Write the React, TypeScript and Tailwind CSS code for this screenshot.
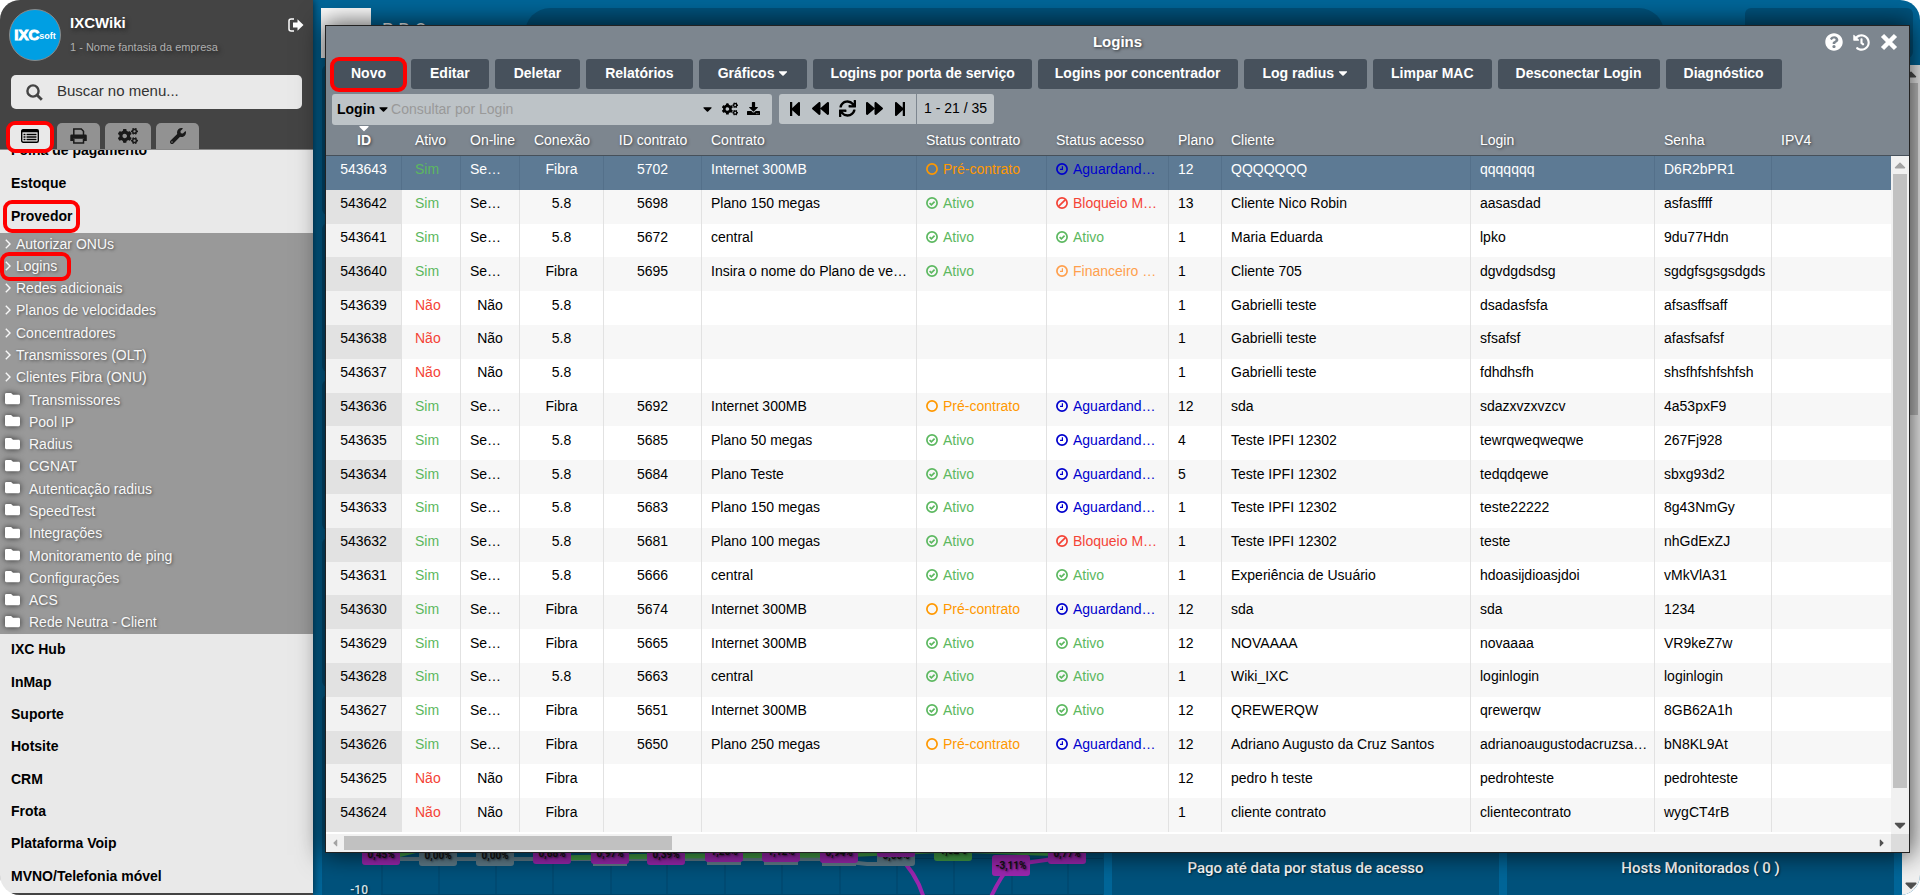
import { ReactNode, useState } from "react";
import {
  FaBackward,
  FaCaretDown,
  FaCaretLeft,
  FaCaretRight,
  FaCaretUp,
  FaCogs,
  FaDownload,
  FaFolder,
  FaForward,
  FaHistory,
  FaQuestionCircle,
  FaStepBackward,
  FaStepForward,
  FaSync,
  FaWrench,
} from "react-icons/fa";

type Row = [string, string, string, string, string, string, string, string, string, string, string, string];

// id, ativo, on-line, conexão, id contrato, contrato, status contrato, status acesso, plano, cliente, login, senha
const rows: Row[] = [
  ["543643", "Sim", "Se…", "Fibra", "5702", "Internet 300MB", "Pré-contrato", "Aguardand…", "12", "QQQQQQQ", "qqqqqqq", "D6R2bPR1"],
  ["543642", "Sim", "Se…", "5.8", "5698", "Plano 150 megas", "Ativo", "Bloqueio M…", "13", "Cliente Nico Robin", "aasasdad", "asfasffff"],
  ["543641", "Sim", "Se…", "5.8", "5672", "central", "Ativo", "Ativo", "1", "Maria Eduarda", "lpko", "9du77Hdn"],
  ["543640", "Sim", "Se…", "Fibra", "5695", "Insira o nome do Plano de ve…", "Ativo", "Financeiro …", "1", "Cliente 705", "dgvdgdsdsg", "sgdgfsgsgsdgds"],
  ["543639", "Não", "Não", "5.8", "", "", "", "", "1", "Gabrielli teste", "dsadasfsfa", "afsasffsaff"],
  ["543638", "Não", "Não", "5.8", "", "", "", "", "1", "Gabrielli teste", "sfsafsf", "afasfsafsf"],
  ["543637", "Não", "Não", "5.8", "", "", "", "", "1", "Gabrielli teste", "fdhdhsfh", "shsfhfshfshfsh"],
  ["543636", "Sim", "Se…", "Fibra", "5692", "Internet 300MB", "Pré-contrato", "Aguardand…", "12", "sda", "sdazxvzxvzcv", "4a53pxF9"],
  ["543635", "Sim", "Se…", "5.8", "5685", "Plano 50 megas", "Ativo", "Aguardand…", "4", "Teste IPFI 12302", "tewrqweqweqwe", "267Fj928"],
  ["543634", "Sim", "Se…", "5.8", "5684", "Plano Teste", "Ativo", "Aguardand…", "5", "Teste IPFI 12302", "tedqdqewe", "sbxg93d2"],
  ["543633", "Sim", "Se…", "5.8", "5683", "Plano 150 megas", "Ativo", "Aguardand…", "1", "Teste IPFI 12302", "teste22222", "8g43NmGy"],
  ["543632", "Sim", "Se…", "5.8", "5681", "Plano 100 megas", "Ativo", "Bloqueio M…", "1", "Teste IPFI 12302", "teste", "nhGdExZJ"],
  ["543631", "Sim", "Se…", "5.8", "5666", "central", "Ativo", "Ativo", "1", "Experiência de Usuário", "hdoasijdioasjdoi", "vMkVlA31"],
  ["543630", "Sim", "Se…", "Fibra", "5674", "Internet 300MB", "Pré-contrato", "Aguardand…", "12", "sda", "sda", "1234"],
  ["543629", "Sim", "Se…", "Fibra", "5665", "Internet 300MB", "Ativo", "Ativo", "12", "NOVAAAA", "novaaaa", "VR9keZ7w"],
  ["543628", "Sim", "Se…", "5.8", "5663", "central", "Ativo", "Ativo", "1", "Wiki_IXC", "loginlogin", "loginlogin"],
  ["543627", "Sim", "Se…", "Fibra", "5651", "Internet 300MB", "Ativo", "Ativo", "12", "QREWERQW", "qrewerqw", "8GB62A1h"],
  ["543626", "Sim", "Se…", "Fibra", "5650", "Plano 250 megas", "Pré-contrato", "Aguardand…", "12", "Adriano Augusto da Cruz Santos", "adrianoaugustodacruzsa…", "bN8KL9At"],
  ["543625", "Não", "Não", "Fibra", "", "", "", "", "12", "pedro h teste", "pedrohteste", "pedrohteste"],
  ["543624", "Não", "Não", "Fibra", "", "", "", "", "1", "cliente contrato", "clientecontrato", "wygCT4rB"],
];

const columns = [
  { label: "ID", col: "w-[76px]", cell: "text-center" },
  { label: "Ativo", col: "w-[59px]", cell: "pl-[13px] text-left" },
  { label: "On-line", col: "w-[59px]", cell: "pl-[9px] text-left" },
  { label: "Conexão", col: "w-[84px]", cell: "text-center" },
  { label: "ID contrato", col: "w-[98px]", cell: "text-center" },
  { label: "Contrato", col: "w-[215px]", cell: "pl-[9px] text-left" },
  { label: "Status contrato", col: "w-[130px]", cell: "pl-[9px] text-left" },
  { label: "Status acesso", col: "w-[122px]", cell: "pl-[9px] text-left" },
  { label: "Plano", col: "w-[53px]", cell: "pl-[9px] text-left" },
  { label: "Cliente", col: "w-[249px]", cell: "pl-[9px] text-left" },
  { label: "Login", col: "w-[184px]", cell: "pl-[9px] text-left" },
  { label: "Senha", col: "w-[117px]", cell: "pl-[9px] text-left" },
  { label: "IPV4", col: "", cell: "pl-[9px] text-left" },
];

const links = [
  "Autorizar ONUs",
  "Logins",
  "Redes adicionais",
  "Planos de velocidades",
  "Concentradores",
  "Transmissores (OLT)",
  "Clientes Fibra (ONU)",
];

const folders = [
  "Transmissores",
  "Pool IP",
  "Radius",
  "CGNAT",
  "Autenticação radius",
  "SpeedTest",
  "Integrações",
  "Monitoramento de ping",
  "Configurações",
  "ACS",
  "Rede Neutra - Client",
];

const modules = ["IXC Hub", "InMap", "Suporte", "Hotsite", "CRM", "Frota", "Plataforma Voip", "MVNO/Telefonia móvel"];

const actions = [
  { label: "Novo", pad: "px-[19px]", marked: true },
  { label: "Editar", pad: "px-[19px]" },
  { label: "Deletar", pad: "px-[19px]" },
  { label: "Relatórios", pad: "px-[19px]" },
  { label: "Gráficos", pad: "px-[19px]", menu: true },
  { label: "Logins por porta de serviço", pad: "px-[17px]" },
  { label: "Logins por concentrador", pad: "px-[17px]" },
  { label: "Log radius", pad: "px-[19px]", menu: true },
  { label: "Limpar MAC", pad: "px-[18px]" },
  { label: "Desconectar Login", pad: "px-[18px]" },
  { label: "Diagnóstico", pad: "px-[18px]" },
];

function Marker({ className }: { className: string }) {
  return <span className={`pointer-events-none absolute z-20 rounded-[9px] border-4 border-[#ff0000] ${className}`} />;
}

function StatusIcon({ status }: { status: string }) {
  let shape: ReactNode = null;
  if (status === "Ativo") shape = <path d="M3.6 6.1l1.8 1.8 3.2-3.2" />;
  if (status.startsWith("Bloqueio")) shape = <path d="M9.2 2.8l-6.4 6.4" />;
  if (status.startsWith("Aguardand") || status.startsWith("Financeiro")) shape = <path d="M6.4 3.2v3.2H4" strokeWidth="1.2" />;
  return (
    <svg viewBox="0 0 12 12" className="h-3 w-3 shrink-0" fill="none" stroke="currentColor" strokeWidth="1.7">
      <circle cx="6" cy="6" r="5.1" />
      {shape}
    </svg>
  );
}

function statusColor(status: string) {
  if (status === "Ativo") return "text-[#5cb860]";
  if (status === "Pré-contrato") return "text-[#ff9800]";
  if (status.startsWith("Aguardand")) return "text-[#0000cd]";
  if (status.startsWith("Bloqueio")) return "text-[#f44336]";
  return "text-[#ffa04d]";
}

function Status({ status }: { status: string }) {
  if (!status) return null;
  return (
    <span className={`flex items-center gap-[5px] ${statusColor(status)}`}>
      <StatusIcon status={status} />
      {status}
    </span>
  );
}

function Sidebar() {
  const [term, setTerm] = useState("");

  return (
    <aside className="relative z-10 flex w-[313px] shrink-0 flex-col bg-[#e9e9e9] shadow-[0_0_8px_rgba(0,0,0,0.7)]">
      <header className="relative z-10 flex h-[150px] shrink-0 flex-col border-b border-[#888] bg-[#444] px-[11px]">
        <div className="flex h-[70px] items-center">
          <div className="-ml-[2px] flex h-[52px] w-[52px] items-center justify-center rounded-full border border-[#8a8a8a] bg-[#009fe3] text-white">
            <span className="text-[15px] font-black [-webkit-text-stroke:1px_white]">IXC</span>
            <span className="pt-1 text-[9px] font-bold">soft</span>
          </div>
          <div className="ml-[9px] flex-1 [text-shadow:2px_2px_4px_rgba(0,0,0,0.5)]">
            <div className="text-[15px] leading-6 font-bold text-white">IXCWiki</div>
            <div className="text-[11px] leading-6 text-[#b0b0b0]">1 - Nome fantasia da empresa</div>
          </div>
          <button aria-label="Sair" className="-mr-[2px] mb-5 text-white">
            <svg viewBox="0 0 16 14" className="h-[14px] w-4">
              <path d="M6 1H3.2C1.8 1 1 1.8 1 3v8c0 1.2.8 2 2.2 2H6" fill="none" stroke="currentColor" strokeWidth="1.5" />
              <path d="M9.5 1.2 15.500 7l-6 5.800V9.500H5V4.500h4.500z" fill="currentColor" />
            </svg>
          </button>
        </div>

        <label className="mt-[5px] flex h-[34px] items-center rounded-[5px] bg-[#e9e9e9] pl-[15px]">
          <svg viewBox="0 0 17 17" className="h-[17px] w-[17px] shrink-0 text-[#444]" fill="none" stroke="currentColor">
            <circle cx="7" cy="7" r="5.6" strokeWidth="2.4" />
            <path d="M11 11l4.800 4.800" strokeWidth="2.8" />
          </svg>
          <input
            type="text"
            value={term}
            onChange={(e) => setTerm(e.target.value)}
            placeholder="Buscar no menu..."
            aria-label="Buscar no menu"
            className="ml-[14px] w-full bg-transparent pb-[2px] text-[15px] text-[#333] outline-none placeholder:text-[#333]"
          />
        </label>

        <div className="mt-auto flex h-[26px] items-stretch gap-[5px] text-[#1a1a1a]">
          <button aria-label="Menu" className="relative -ml-[3px] flex w-[44px] items-center justify-center rounded-t-[5px] bg-[#e9e9e9] text-black">
            <svg viewBox="0 0 18 14" className="h-[14px] w-[18px]">
              <rect x="0.700" y="0.700" width="16.600" height="12.600" rx="1.500" fill="none" stroke="currentColor" strokeWidth="1.400" />
              <rect x="0.700" y="0.700" width="16.600" height="2.600" fill="currentColor" />
              <path d="M2.500 5.500h2M2.500 8h2M2.500 10.500h2M5.500 5.500h10M5.500 8h10M5.500 10.500h10" stroke="currentColor" strokeWidth="1.500" />
            </svg>
            <Marker className="-top-[2px] -bottom-[4px] -left-[2px] -right-[2px]" />
          </button>
          <button aria-label="Imprimir" className="flex w-[43px] items-center justify-center rounded-t-[5px] bg-[#929292]">
            <svg viewBox="0 0 17 16" className="h-4 w-[17px]">
              <path d="M3.800 7V1h7.500l2.200 2.200V7" fill="none" stroke="currentColor" strokeWidth="1.5" />
              <path d="M1.500 6.500h14q1.300 0 1.300 1.300v5.200h-3v-2.300H3.300V13h-3V7.800q0-1.300 1.200-1.300z" fill="currentColor" />
              <path d="M3.800 11v4h9.700v-4" fill="none" stroke="currentColor" strokeWidth="1.5" />
            </svg>
          </button>
          <button aria-label="Configurações" className="flex w-[46px] items-center justify-center rounded-t-[5px] bg-[#929292]">
            <FaCogs className="h-[18px] w-[20px]" />
          </button>
          <button aria-label="Ferramentas" className="flex w-[43px] items-center justify-center rounded-t-[5px] bg-[#929292]">
            <FaWrench className="h-4 w-4" />
          </button>
        </div>
      </header>

      <nav className="flex flex-1 flex-col overflow-hidden text-sm text-black">
        <div className="-mt-4 shrink-0 font-bold">
          <a href="#folha" className="flex h-[33px] items-center pb-[2px] pl-[11px]">Folha de pagamento</a>
          <a href="#estoque" className="flex h-[33px] items-center pb-[2px] pl-[11px]">Estoque</a>
          <a href="#provedor" className="relative flex h-[33px] items-center pb-[2px] pl-[11px]">
            Provedor
            <Marker className="inset-y-0 left-[3px] w-[77px]" />
          </a>
        </div>

        <ul className="grid h-[401px] shrink-0 auto-rows-fr bg-[#999] text-[#f8f8f8] [text-shadow:1px_1px_3px_rgba(0,0,0,0.5)]">
          {links.map((item) => (
            <li key={item} className="relative flex items-center pb-px">
              <svg viewBox="0 0 6 10" className="ml-[5px] h-[10px] w-[6px]" fill="none" stroke="currentColor" strokeWidth="1.4">
                <path d="M0.8 0.8L5 5 0.8 9.2" />
              </svg>
              <a href="#link" className="ml-[5px]">{item}</a>
              {item === "Logins" && <Marker className="-inset-y-[3px] left-0 w-[71px]" />}
            </li>
          ))}
          {folders.map((item) => (
            <li key={item} className="flex items-center pb-px">
              <FaFolder className="mb-[2px] ml-[5px] h-[15px] w-[15px] text-white drop-shadow-[0_0_3px_rgba(0,0,0,0.7)]" />
              <a href="#pasta" className="ml-[9px]">{item}</a>
            </li>
          ))}
        </ul>

        <ul className="flex flex-1 flex-col border-b-2 border-[#444] font-bold">
          {modules.map((item) => (
            <li key={item} className="flex flex-1 items-center pb-[2px] pl-[11px]">
              <a href="#modulo">{item}</a>
            </li>
          ))}
        </ul>
      </nav>
    </aside>
  );
}

const badges = [
  { x: 59, bottom: 40, text: "0,45%", color: "#9c27b0" },
  { x: 116, bottom: 41, text: "0,00%", color: "#607d8b" },
  { x: 173, bottom: 41, text: "0,00%", color: "#607d8b" },
  { x: 230, bottom: 39, text: "0,68%", color: "#9c27b0" },
  { x: 288, bottom: 39, text: "0,97%", color: "#9c27b0" },
  { x: 344, bottom: 40, text: "0,39%", color: "#9c27b0" },
  { x: 402, bottom: 37, text: "1,26%", color: "#9c27b0" },
  { x: 459, bottom: 37, text: "1,12%", color: "#9c27b0" },
  { x: 517, bottom: 38, text: "0,94%", color: "#9c27b0" },
  { x: 574, bottom: 41, text: "0,00%", color: "#607d8b" },
  { x: 631, bottom: 36, text: "1,52%", color: "#43a047" },
  { x: 689, bottom: 51, text: "-3,11%", color: "#9c27b0" },
  { x: 745, bottom: 39, text: "0,77%", color: "#9c27b0" },
];

function Chart() {
  return (
    <svg width="781" height="70" viewBox="0 0 781 70" fontFamily="Roboto, sans-serif">
      {badges.map((b) => (
        <path key={b.x} d={`M${b.x + 1} 0V70`} stroke="#00456a" strokeWidth="1" />
      ))}
      <path d="M59 69.500H781M560 33.500H781" stroke="#00456a" strokeWidth="1" />
      <path d="M59 34H500L545 39H590" fill="none" stroke="#607d8b" strokeWidth="4" />
      <path d="M59 34L116 20M230 33L344 31L517 30L631 25L745 29" fill="none" stroke="#43a047" strokeWidth="5" />
      <path d="M574 28Q596 50 602 74M668 74Q678 52 689 40L745 32" fill="none" stroke="#9c27b0" strokeWidth="4" />
      <path d="M271 39h34M385 38h34M442 38h34M500 39h34" stroke="#607d8b" strokeWidth="4" />
      {badges.map((b) => (
        <g key={b.x}>
          <rect x={b.x - 19} y={b.bottom - 21} width="38" height="21" rx="3" fill={b.color} />
          <text x={b.x} y={b.bottom - 7} textAnchor="middle" fontSize="10" fontWeight="700" fill="#111">
            {b.text}
          </text>
        </g>
      ))}
      <rect x="555" y="11" width="38" height="21" rx="3" fill="#9c27b0" />
      <text x="46" y="69" textAnchor="end" fontSize="12" fill="#d5e3ea">
        -10
      </text>
    </svg>
  );
}

function Dashboard() {
  return (
    <main className="flex min-w-0 flex-1 flex-col bg-[#006699] font-[Roboto,sans-serif]">
      <div className="flex h-[65px] shrink-0 items-start pt-2 pr-[7px] pl-2 text-[#d5e3ea]">
        <div className="h-[50px] w-[50px] bg-white" />
        <span className="ml-[11px] pt-2 text-lg tracking-[5px] text-white">PRO —</span>
        <div className="ml-auto h-[50px] w-[1139px] rounded-full bg-[#00527c]" />
        <div className="ml-[81px] h-[50px] w-[168px] rounded-[6px] bg-[#00527c]" />
      </div>

      <div className="flex flex-1">
        <div className="flex flex-1 flex-col gap-2 pr-2 pl-[9px]">
          <div className="flex-1 rounded-[6px] bg-[#00527c]" />
          <div className="flex-1 rounded-[6px] bg-[#00527c]" />
          <div className="flex-1 rounded-[6px] bg-[#00527c]" />
          <div className="flex-1 rounded-[6px] bg-[#00527c]" />
          <div className="grid h-[200px] grid-cols-4 gap-2 text-center text-[15px] font-medium text-white [text-shadow:1px_1px_2px_rgba(0,0,0,0.6)]">
            <div className="col-span-2 flex items-end overflow-hidden rounded-t-[6px] bg-[#00527c]">
              <Chart />
            </div>
            <h3 className="flex items-end justify-center rounded-t-[6px] bg-[#00527c] pb-4">
              Pago até data por status de acesso
            </h3>
            <h3 className="flex items-end justify-center rounded-t-[6px] bg-[#00527c] pb-4">Hosts Monitorados ( 0 )</h3>
          </div>
        </div>
        <div className="flex w-[18px] flex-col items-center bg-[#f1f1f1] text-[#505050]">
          <FaCaretUp className="h-[18px] w-3 shrink-0" />
          <div className="h-2/5 w-[14px] bg-[#c1c1c1]" />
          <FaCaretDown className="mt-auto h-5 w-3 shrink-0" />
        </div>
      </div>
    </main>
  );
}

function LoginsTable() {
  return (
    <table className="h-full w-full table-fixed border-separate border-spacing-0 text-sm text-black">
      <colgroup>
        {columns.map((c) => (
          <col key={c.label} className={c.col} />
        ))}
      </colgroup>
      <thead>
        <tr className="h-[31px] bg-[#7d868f] text-white [text-shadow:1px_1px_3px_rgba(0,0,0,0.5)]">
          {columns.map((c) => (
            <th
              key={c.label}
              className={`relative border-b border-[#46505a] pb-px whitespace-nowrap ${c.label === "ID" ? "font-bold" : "font-normal"} ${c.cell}`}
            >
              {c.label === "ID" && <FaCaretDown className="absolute -top-[5px] left-[30px] h-4 w-4" />}
              {c.label}
            </th>
          ))}
        </tr>
      </thead>
      <tbody>
        {rows.map((row, i) => {
          const selected = i === 0;
          const even = i % 2 === 1;
          return (
            <tr key={row[0]} className={selected ? "bg-[#5d7a94] text-white" : even ? "bg-[#f7f7f7]" : "bg-white"}>
              {columns.map((c, j) => {
                const value = row[j] ?? "";
                let style = c.cell;
                if (j === 0 && !selected) style += even ? " bg-[#e2e2e2]" : " bg-[#f2f2f2]";
                if (j === 1) style += value === "Sim" ? " text-[#5cb860]" : " text-[#f44336]";
                if (j === 2 && value === "Não") style = "text-center";
                if (j < columns.length - 1) style += selected ? " border-r border-[#54708a]" : " border-r border-[#e2e2e2]";
                return (
                  <td key={c.label} className={`pb-[7px] leading-5 whitespace-nowrap ${style}`}>
                    {j === 6 || j === 7 ? <Status status={value} /> : value}
                  </td>
                );
              })}
            </tr>
          );
        })}
      </tbody>
    </table>
  );
}

function LoginsWindow() {
  const [query, setQuery] = useState("");

  return (
    <section className="absolute top-[25px] right-[10px] bottom-[42px] left-[325px] z-20 flex flex-col border border-[#222] bg-[#7d868f] shadow-[0_0_24px_2px_rgba(0,0,0,0.7)]">
      <header className="relative flex h-[33px] shrink-0 items-center justify-center pb-px">
        <h1 className="text-[15px] font-bold text-white [text-shadow:1px_1px_3px_rgba(0,0,0,0.6)]">Logins</h1>
        <div className="absolute right-[11px] flex items-center gap-[10px] text-white">
          <button aria-label="Ajuda"><FaQuestionCircle className="h-[18px] w-[18px]" /></button>
          <button aria-label="Histórico"><FaHistory className="h-[17px] w-[17px]" /></button>
          <button aria-label="Fechar">
            <svg viewBox="0 0 18 18" className="h-[18px] w-[18px]" stroke="currentColor" strokeWidth="4.5">
              <path d="M2.500 2.500l13 13M15.500 2.500l-13 13" />
            </svg>
          </button>
        </div>
      </header>

      <div className="flex shrink-0 gap-[6px] pl-[6px]">
        {actions.map((a) => (
          <button
            key={a.label}
            className={`relative flex h-[30px] items-center justify-center rounded-[3px] bg-[#47515c] text-sm font-bold whitespace-nowrap text-white ${a.menu ? "pb-[3px]" : "pb-[2px]"} ${a.pad}`}
          >
            {a.label}
            {a.menu && <FaCaretDown className="ml-1 h-[14px] w-[10px]" />}
            {a.marked && <Marker className="-inset-x-[2px] -top-[2px] -bottom-[3px]" />}
          </button>
        ))}
      </div>

      <div className="mt-[5px] flex shrink-0 items-start gap-[7px] pl-[6px] text-black">
        <div className="flex h-[31px] w-[440px] items-center rounded-[3px] bg-[#bdc3c7] pr-3 pb-[2px] pl-[5px]">
          <button className="flex items-center gap-1 text-sm font-bold">
            Login
            <FaCaretDown className="h-[14px] w-[9px]" />
          </button>
          <input
            type="text"
            value={query}
            onChange={(e) => setQuery(e.target.value)}
            placeholder="Consultar por Login"
            aria-label="Consultar por Login"
            className="ml-[3px] min-w-0 flex-1 bg-transparent text-sm outline-none placeholder:text-[#999]"
          />
          <button aria-label="Opções"><FaCaretDown className="h-[14px] w-[9px]" /></button>
          <button aria-label="Configurar" className="ml-[10px]"><FaCogs className="h-[14px] w-4" /></button>
          <button aria-label="Baixar" className="ml-[9px]"><FaDownload className="h-[13px] w-[13px]" /></button>
        </div>

        <div className="flex h-[30px] items-stretch overflow-hidden rounded-[3px] bg-[#bdc3c7]">
          <div className="flex w-[138px] items-center justify-between border-r border-[#7d868f] pr-[9px] pb-px pl-[9px]">
            <button aria-label="Primeira"><FaStepBackward className="h-4 w-[14px]" /></button>
            <button aria-label="Anterior"><FaBackward className="h-[17px] w-[17px]" /></button>
            <button aria-label="Atualizar"><FaSync className="h-[17px] w-[17px]" /></button>
            <button aria-label="Próxima"><FaForward className="h-[17px] w-[17px]" /></button>
            <button aria-label="Última"><FaStepForward className="h-4 w-[14px]" /></button>
          </div>
          <span className="flex items-center px-[7px] pb-[2px] text-sm">1 - 21 / 35</span>
        </div>
      </div>

      <div className="flex min-h-0 flex-1">
        <div className="flex-1 bg-white pb-[2px]">
          <LoginsTable />
        </div>
        <div className="flex w-[18px] shrink-0 flex-col">
          <div className="h-[31px] shrink-0 border-b border-[#46505a]" />
          <div className="flex flex-1 flex-col items-center bg-[#f1f1f1]">
            <FaCaretUp className="h-[18px] w-3 shrink-0 text-[#a3a3a3]" />
            <div className="mb-7 w-[14px] flex-1 bg-[#c1c1c1]" />
            <FaCaretDown className="h-[18px] w-3 shrink-0 text-[#505050]" />
          </div>
        </div>
      </div>

      <div className="flex h-[18px] shrink-0 items-center bg-[#f1f1f1]">
        <FaCaretLeft className="h-3 w-[18px] text-[#a3a3a3]" />
        <div className="h-[14px] w-[328px] bg-[#c1c1c1]" />
        <FaCaretRight className="ml-auto h-3 w-[18px] text-[#505050]" />
        <div className="h-full w-[18px] bg-[#dcdcdc]" />
      </div>
    </section>
  );
}

export default function App() {
  return (
    <div className="bg-white font-['Liberation_Sans',Arial,sans-serif]">
      <div className="relative flex h-screen overflow-hidden rounded-[20px]">
        <Sidebar />
        <Dashboard />
        <LoginsWindow />
      </div>
    </div>
  );
}
